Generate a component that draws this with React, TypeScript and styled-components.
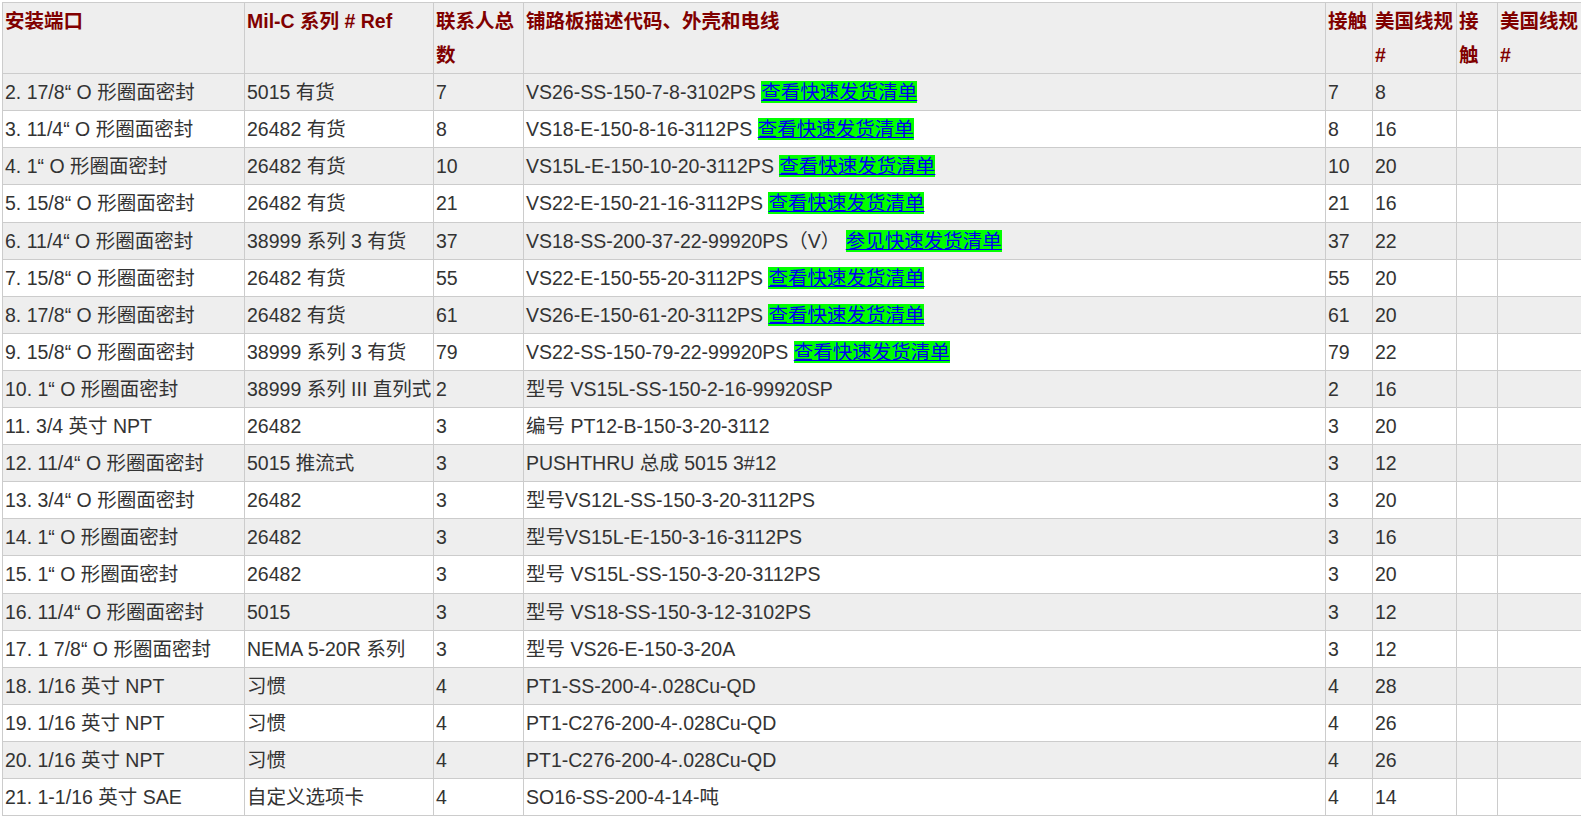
import React from "react";
import styled, { createGlobalStyle } from "styled-components";

const GlobalStyle = createGlobalStyle`
  html, body {
    margin: 0;
    padding: 0;
    overflow: hidden;
    background: #fff;
  }
`;

type Row = {
  port: string;
  ref: string;
  total: string;
  code: string;
  link?: string;
  contact: string;
  gauge: string;
};

const rows: Row[] = [
  { port: "2. 17/8“ O 形圈面密封", ref: "5015 有货", total: "7", code: "VS26-SS-150-7-8-3102PS ", link: "查看快速发货清单", contact: "7", gauge: "8" },
  { port: "3. 11/4“ O 形圈面密封", ref: "26482 有货", total: "8", code: "VS18-E-150-8-16-3112PS ", link: "查看快速发货清单", contact: "8", gauge: "16" },
  { port: "4. 1“ O 形圈面密封", ref: "26482 有货", total: "10", code: "VS15L-E-150-10-20-3112PS ", link: "查看快速发货清单", contact: "10", gauge: "20" },
  { port: "5. 15/8“ O 形圈面密封", ref: "26482 有货", total: "21", code: "VS22-E-150-21-16-3112PS ", link: "查看快速发货清单", contact: "21", gauge: "16" },
  { port: "6. 11/4“ O 形圈面密封", ref: "38999 系列 3 有货", total: "37", code: "VS18-SS-200-37-22-99920PS（V） ", link: "参见快速发货清单", contact: "37", gauge: "22" },
  { port: "7. 15/8“ O 形圈面密封", ref: "26482 有货", total: "55", code: "VS22-E-150-55-20-3112PS ", link: "查看快速发货清单", contact: "55", gauge: "20" },
  { port: "8. 17/8“ O 形圈面密封", ref: "26482 有货", total: "61", code: "VS26-E-150-61-20-3112PS ", link: "查看快速发货清单", contact: "61", gauge: "20" },
  { port: "9. 15/8“ O 形圈面密封", ref: "38999 系列 3 有货", total: "79", code: "VS22-SS-150-79-22-99920PS ", link: "查看快速发货清单", contact: "79", gauge: "22" },
  { port: "10. 1“ O 形圈面密封", ref: "38999 系列 III 直列式", total: "2", code: "型号 VS15L-SS-150-2-16-99920SP", contact: "2", gauge: "16" },
  { port: "11. 3/4 英寸 NPT", ref: "26482", total: "3", code: "编号 PT12-B-150-3-20-3112", contact: "3", gauge: "20" },
  { port: "12. 11/4“ O 形圈面密封", ref: "5015 推流式", total: "3", code: "PUSHTHRU 总成 5015 3#12", contact: "3", gauge: "12" },
  { port: "13. 3/4“ O 形圈面密封", ref: "26482", total: "3", code: "型号VS12L-SS-150-3-20-3112PS", contact: "3", gauge: "20" },
  { port: "14. 1“ O 形圈面密封", ref: "26482", total: "3", code: "型号VS15L-E-150-3-16-3112PS", contact: "3", gauge: "16" },
  { port: "15. 1“ O 形圈面密封", ref: "26482", total: "3", code: "型号 VS15L-SS-150-3-20-3112PS", contact: "3", gauge: "20" },
  { port: "16. 11/4“ O 形圈面密封", ref: "5015", total: "3", code: "型号 VS18-SS-150-3-12-3102PS", contact: "3", gauge: "12" },
  { port: "17. 1 7/8“ O 形圈面密封", ref: "NEMA 5-20R 系列", total: "3", code: "型号 VS26-E-150-3-20A", contact: "3", gauge: "12" },
  { port: "18. 1/16 英寸 NPT", ref: "习惯", total: "4", code: "PT1-SS-200-4-.028Cu-QD", contact: "4", gauge: "28" },
  { port: "19. 1/16 英寸 NPT", ref: "习惯", total: "4", code: "PT1-C276-200-4-.028Cu-QD", contact: "4", gauge: "26" },
  { port: "20. 1/16 英寸 NPT", ref: "习惯", total: "4", code: "PT1-C276-200-4-.028Cu-QD", contact: "4", gauge: "26" },
  { port: "21. 1-1/16 英寸 SAE", ref: "自定义选项卡", total: "4", code: "SO16-SS-200-4-14-吨", contact: "4", gauge: "14" },
];

const colWidths = [242, 189, 90, 802, 47, 84, 41, 84];

export default function App() {
  return (
    <>
      <GlobalStyle />
      <Page>
        <SpecTable>
          <colgroup>
            {colWidths.map((w, i) => (
              <col key={i} style={{ width: w }} />
            ))}
          </colgroup>
          <thead>
            <tr>
              <HeadCell>安装端口</HeadCell>
              <HeadCell>Mil-C 系列 # Ref</HeadCell>
              <HeadCell>联系人总数</HeadCell>
              <HeadCell>铺路板描述代码、外壳和电线</HeadCell>
              <HeadCell>接触</HeadCell>
              <HeadCell>美国线规 #</HeadCell>
              <HeadCell>接触</HeadCell>
              <HeadCell>美国线规 #</HeadCell>
            </tr>
          </thead>
          <tbody>
            {rows.map((r) => (
              <BodyRow key={r.port}>
                <Cell>{r.port}</Cell>
                <Cell>{r.ref}</Cell>
                <Cell>{r.total}</Cell>
                <Cell>
                  {r.code}
                  {r.link && <QuickLink href="#">{r.link}</QuickLink>}
                </Cell>
                <Cell>{r.contact}</Cell>
                <Cell>{r.gauge}</Cell>
                <Cell />
                <Cell />
              </BodyRow>
            ))}
          </tbody>
        </SpecTable>
      </Page>
    </>
  );
}

const Page = styled.div`
  padding: 2px 0 0 2px;
  width: 1700px;
`;

const SpecTable = styled.table`
  table-layout: fixed;
  width: 1579px;
  border-collapse: collapse;
  font-family: "Liberation Sans", Arial, "Noto Sans CJK SC", sans-serif;
  font-size: 19.5px;
  line-height: 34.1px;
  color: #333;
`;

const HeadCell = styled.th`
  background: #eee;
  color: #800000;
  font-weight: bold;
  text-align: left;
  vertical-align: top;
  padding: 1px 2px;
  border: 1px solid #ccc;
`;

const BodyRow = styled.tr`
  background: #fff;
  &:nth-child(odd) {
    background: #eee;
  }
`;

const Cell = styled.td`
  padding: 1px 2px;
  border: 1px solid #ccc;
  vertical-align: top;
  white-space: nowrap;
  overflow: hidden;
`;

const QuickLink = styled.a`
  color: #0000ee;
  background: #00ff00;
  text-decoration: underline;
`;
